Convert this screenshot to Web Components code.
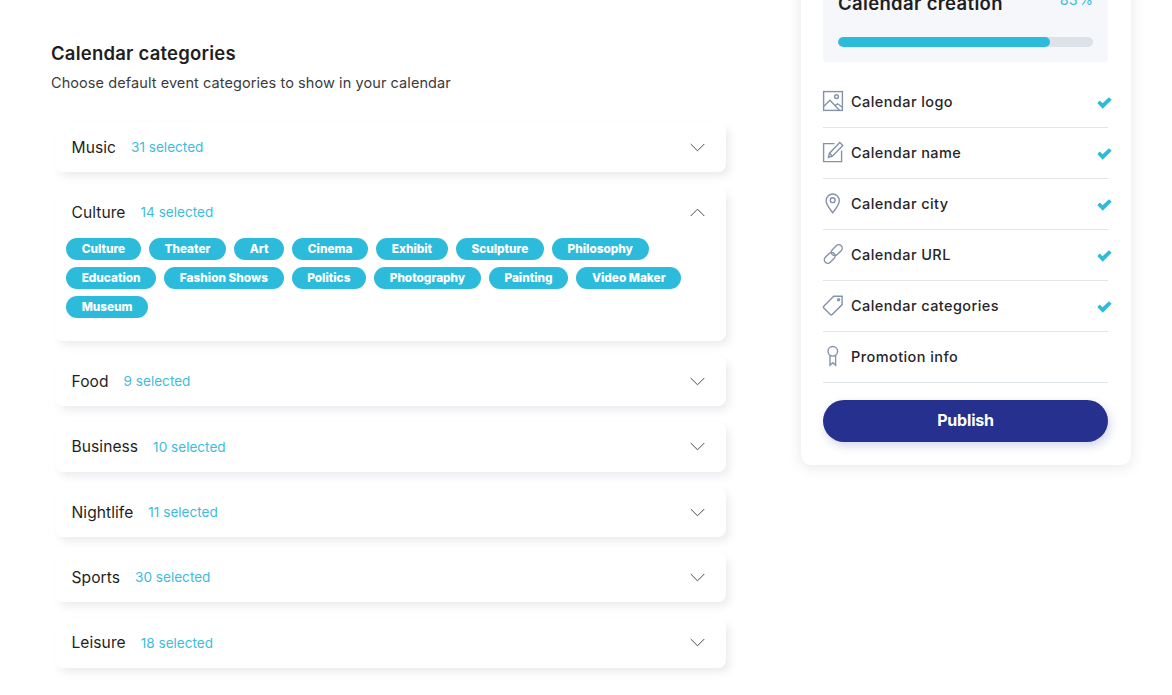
<!DOCTYPE html>
<html>
<head>
<meta charset="utf-8">
<title>Calendar categories</title>
<style>
    html, body { margin: 0; height: 695px; overflow: hidden; background: #fff; }
    body { font-family: "Inter", "Liberation Sans", sans-serif; color: #1f1f23; }
</style>
</head>
<body>
<calendar-page>
    <div slot="main">
        <cat-accordion name="Music" count="31 selected"></cat-accordion>
        <cat-accordion name="Culture" count="14 selected" open>
            <cat-chip>Culture</cat-chip><cat-chip>Theater</cat-chip><cat-chip>Art</cat-chip><cat-chip>Cinema</cat-chip><cat-chip>Exhibit</cat-chip><cat-chip>Sculpture</cat-chip><cat-chip>Philosophy</cat-chip><cat-chip>Education</cat-chip><cat-chip>Fashion Shows</cat-chip><cat-chip>Politics</cat-chip><cat-chip>Photography</cat-chip><cat-chip>Painting</cat-chip><cat-chip>Video Maker</cat-chip><cat-chip>Museum</cat-chip>
        </cat-accordion>
        <cat-accordion name="Food" count="9 selected"></cat-accordion>
        <cat-accordion name="Business" count="10 selected"></cat-accordion>
        <cat-accordion name="Nightlife" count="11 selected"></cat-accordion>
        <cat-accordion name="Sports" count="30 selected"></cat-accordion>
        <cat-accordion name="Leisure" count="18 selected"></cat-accordion>
    </div>
    <progress-card slot="side">
        <step-row icon="logo" done>Calendar logo</step-row>
        <step-row icon="name" done>Calendar name</step-row>
        <step-row icon="city" done>Calendar city</step-row>
        <step-row icon="url" done>Calendar URL</step-row>
        <step-row icon="tag" done>Calendar categories</step-row>
        <step-row icon="promo">Promotion info</step-row>
    </progress-card>
</calendar-page>

<script>
const pageTemplate = document.createElement('template');
pageTemplate.innerHTML = `
<style>
    :host { display: flex; align-items: flex-start; width: 1172px; }
    .main { width: 750px; padding: 42px 0 0 51px; box-sizing: border-box; flex: none; }
    h1 { margin: 0; font-size: 18.5px; line-height: 22px; font-weight: 600; letter-spacing: 0.22px; color: #1f1f23; }
    p { margin: 9px 0 0; font-size: 14.5px; line-height: 20px; color: #3b3b40; letter-spacing: 0.08px; }
    .list { margin: 29px 0 0 4px; width: 671px; }
    .side { margin: -40px 0 0 0; margin-left: 51px; width: 330px; flex: none; }
    ::slotted([slot="main"]) { display: flex; flex-direction: column; gap: 15.4px; }
</style>
<div class="main">
    <h1>Calendar categories</h1>
    <p>Choose default event categories to show in your calendar</p>
    <div class="list"><slot name="main"></slot></div>
</div>
<div class="side"><slot name="side"></slot></div>
`;

class CalendarPage extends HTMLElement {
    constructor() {
        super();
        this.attachShadow({mode: 'open'});
        this.shadowRoot.appendChild(pageTemplate.content.cloneNode(true));
    }
}

const accordionTemplate = document.createElement('template');
accordionTemplate.innerHTML = `
<style>
    :host {
        display: block;
        background: #fff;
        border-radius: 8px;
        box-shadow: 4px 5px 8px -1px rgba(60, 70, 100, 0.11);
    }
    .head { display: flex; align-items: center; height: 50px; padding: 0 21px 0 16.5px; }
    .name { font-size: 15.6px; color: #1f1f23; letter-spacing: 0.05px; }
    .count { margin-left: 15px; font-size: 13.6px; color: #3dbcdc; letter-spacing: 0; }
    svg { margin-left: auto; display: block; }
    :host([open]) svg { transform: rotate(180deg); }
    .chips { display: none; flex-wrap: wrap; gap: 7.5px 8px; padding: 1px 40px 23px 11px; }
    :host([open]) .chips { display: flex; }
</style>
<div class="head">
    <span class="name"></span>
    <span class="count"></span>
    <svg width="15" height="9" viewBox="0 0 15 9" fill="none" stroke="#4a4a4f" stroke-width="1"><path d="M0.700 1 7.500 7.800 14.300 1"/></svg>
</div>
<div class="chips"><slot></slot></div>
`;

class CatAccordion extends HTMLElement {
    constructor() {
        super();
        this.attachShadow({mode: 'open'});
        this.shadowRoot.appendChild(accordionTemplate.content.cloneNode(true));
    }
    connectedCallback() {
        this.shadowRoot.querySelector('.name').textContent = this.getAttribute('name');
        this.shadowRoot.querySelector('.count').textContent = this.getAttribute('count');
        this.shadowRoot.querySelector('.head').addEventListener('click', () => this.toggleAttribute('open'));
    }
}

const chipTemplate = document.createElement('template');
chipTemplate.innerHTML = `
<style>
    :host {
        display: inline-flex;
        align-items: center;
        box-sizing: border-box;
        height: 21.5px;
        padding: 0 15.65px 1px;
        border-radius: 11px;
        background: #2dbbdb;
        color: #fff;
        font-size: 11.8px;
        font-weight: 800;
        letter-spacing: 0;
    }
</style>
<slot></slot>
`;

class CatChip extends HTMLElement {
    constructor() {
        super();
        this.attachShadow({mode: 'open'});
        this.shadowRoot.appendChild(chipTemplate.content.cloneNode(true));
    }
}

const cardTemplate = document.createElement('template');
cardTemplate.innerHTML = `
<style>
    :host {
        display: block;
        box-sizing: border-box;
        width: 330px;
        height: 505px;
        padding: 0 23px 0 22px;
        background: #fff;
        border-radius: 10px;
        box-shadow: 0 2px 14px rgba(60, 70, 100, 0.13);
    }
    .panel { box-sizing: border-box; height: 102px; padding: 32px 15px 0; background: #f5f7fa; border-radius: 0 0 4px 4px; }
    .top { display: flex; justify-content: space-between; height: 45px; }
    .title { font-size: 18.5px; line-height: 22px; font-weight: 600; letter-spacing: 0.35px; color: #1f1f23; }
    .pct { font-size: 14.5px; line-height: 20px; margin-top: -2px; word-spacing: -3px; color: #3dbcdc; }
    .track { height: 10px; border-radius: 5px; background: #dde1e8; overflow: hidden; }
    .fill { width: 83%; height: 100%; border-radius: 5px; background: #2dbbdb; }
    .steps { margin-top: 15px; }
    button {
        display: block;
        width: 100%;
        height: 42px;
        margin-top: 17px;
        padding: 0 0 2px;
        border: 0;
        border-radius: 21px;
        background: #25308f;
        color: #fff;
        font: 700 16px "Inter", "Liberation Sans", sans-serif;
        letter-spacing: -0.2px;
        box-shadow: 2px 4px 10px rgba(37, 48, 143, 0.2);
    }
</style>
<div class="panel">
    <div class="top"><span class="title">Calendar creation</span><span class="pct">83 %</span></div>
    <div class="track"><div class="fill"></div></div>
</div>
<div class="steps"><slot></slot></div>
<button>Publish</button>
`;

class ProgressCard extends HTMLElement {
    constructor() {
        super();
        this.attachShadow({mode: 'open'});
        this.shadowRoot.appendChild(cardTemplate.content.cloneNode(true));
    }
}

const stepIcons = {
    logo: '<rect x="1.600" y="1.600" width="18.800" height="18.800"/><circle cx="14.500" cy="6.600" r="1.900"/><path d="M1.600 16.500 8 10.200l9.600 10.200M13 15.500l2.600-1.700 4.800 3.400"/>',
    name: '<path d="M12.500 2.600H1.600v18h18V9.500"/><path d="M6.400 16.400l1.100-4.200L17.800 1.600l3 3-10.400 10.600z"/><path d="M7.500 12.200l2.900 3"/>',
    city: '<path d="M10.700 20.800C7.500 16.600 4.100 13 4.100 8.600a6.600 6.600 0 0 1 13.200 0c0 4.400-3.400 8-6.600 12.200z"/><circle cx="10.700" cy="8.200" r="2.400"/>',
    url: '<rect x="1.500" y="11.300" width="12.500" height="7" rx="3.500" transform="rotate(-45 7.750 14.800)"/><rect x="8.500" y="3.700" width="12.500" height="7" rx="3.500" transform="rotate(-45 14.750 7.200)"/>',
    tag: '<path d="M1.800 12.200 11.700 2.300h8.400v8.300l-9.900 9.900a1.300 1.300 0 0 1-1.800 0l-6.600-6.500a1.300 1.300 0 0 1 0-1.800z"/><circle cx="16.600" cy="5.800" r="1"/>',
    promo: '<circle cx="10.800" cy="6.300" r="4.800"/><path d="M8 10.600v9.700l2.800-2.500 2.800 2.500v-9.700"/>'
};

const stepTemplate = document.createElement('template');
stepTemplate.innerHTML = `
<style>
    :host {
        display: flex;
        align-items: center;
        box-sizing: border-box;
        height: 51px;
        padding-bottom: 2px;
        border-bottom: 1px solid #e1e6eb;
        color: #26262b;
        font-size: 14.5px;
        font-weight: 500;
        letter-spacing: 0.42px;
    }
    .icon { width: 22px; height: 22px; flex: none; margin: 0 7px 0 -1px; display: block; fill: none; stroke: #8493a8; stroke-width: 1.4; }
    .check { display: none; margin: 4px -4px 0 auto; width: 15px; height: 12px; fill: #2dbbdb; }
    :host([done]) .check { display: block; }
</style>
<svg class="icon" viewBox="0 0 22 22"></svg>
<span><slot></slot></span>
<svg class="check" viewBox="0 0 15 12"><path d="M0.300 6 2.800 3.600 5.500 6.200 12 0.200 14.700 2.700 5.700 11.800z"/></svg>
`;

class StepRow extends HTMLElement {
    constructor() {
        super();
        this.attachShadow({mode: 'open'});
        this.shadowRoot.appendChild(stepTemplate.content.cloneNode(true));
    }
    connectedCallback() {
        this.shadowRoot.querySelector('.icon').innerHTML = stepIcons[this.getAttribute('icon')];
    }
}

window.customElements.define('calendar-page', CalendarPage);
window.customElements.define('cat-accordion', CatAccordion);
window.customElements.define('cat-chip', CatChip);
window.customElements.define('progress-card', ProgressCard);
window.customElements.define('step-row', StepRow);
</script>
</body>
</html>
